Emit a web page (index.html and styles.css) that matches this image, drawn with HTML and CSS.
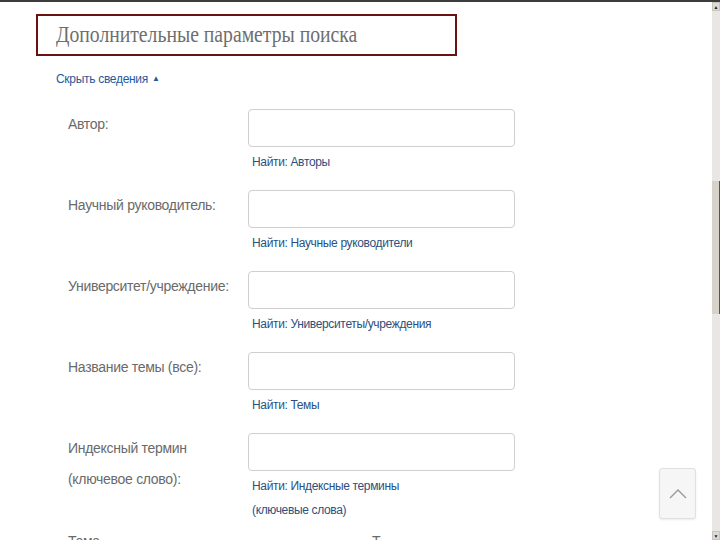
FILE: index.html
```html
<!DOCTYPE html>
<html lang="ru">
<head>
<meta charset="utf-8">
<title>Дополнительные параметры поиска</title>
<link rel="stylesheet" href="styles.css">
</head>
<body>
<div class="viewport">
  <main class="content">
    <h1 class="title-box"><span class="title-text">Дополнительные параметры поиска</span></h1>
    <a class="toggle" href="#">Скрыть сведения <span class="tri">▲</span></a>
    <div class="form">
      <div class="row">
        <label class="label">Автор:</label>
        <div class="field"><div class="input"></div><a class="find" href="#">Найти: Авторы</a></div>
      </div>
      <div class="row">
        <label class="label">Научный руководитель:</label>
        <div class="field"><div class="input"></div><a class="find" href="#">Найти: Научные руководители</a></div>
      </div>
      <div class="row">
        <label class="label">Университет/учреждение:</label>
        <div class="field"><div class="input"></div><a class="find" href="#">Найти: Университеты/учреждения</a></div>
      </div>
      <div class="row">
        <label class="label">Название темы (все):</label>
        <div class="field"><div class="input"></div><a class="find" href="#">Найти: Темы</a></div>
      </div>
      <div class="row row-tight">
        <label class="label">Индексный термин<br>(ключевое слово):</label>
        <div class="field"><div class="input"></div><a class="find" href="#">Найти: Индексные термины<br>(ключевые слова)</a></div>
      </div>
      <div class="row">
        <label class="label">Тема</label>
        <div class="field"><span class="label">Т</span></div>
      </div>
    </div>
    <button class="to-top" aria-label="Наверх">
      <svg width="18" height="12" viewBox="0 0 18 12"><path d="M1 10 L9 2 L17 10" fill="none" stroke="#9a9a9a" stroke-width="1.4"/></svg>
    </button>
  </main>
  <div class="scrollbar">
    <div class="sb-btn">▲</div>
    <div class="sb-track">
      <div class="sb-thumb"></div>
    </div>
    <div class="sb-btn">▼</div>
  </div>
</div>
</body>
</html>
```

FILE: styles.css
```css
html, body {
  margin: 0;
  padding: 0;
  background: #fff;
}
.viewport {
  display: flex;
  height: 538px;
  border-top: 2px solid #3c3c3c;
  overflow: hidden;
}
.content {
  position: relative;
  flex: 1;
  padding-left: 36px;
  overflow: hidden;
  font-family: "Liberation Sans", Arial, sans-serif;
}
.title-box {
  box-sizing: border-box;
  width: 421px;
  height: 42px;
  margin: 12px 0 0 0;
  border: 2px solid #6a1212;
  padding-left: 18px;
  font-family: "Liberation Serif", "Times New Roman", serif;
  font-weight: normal;
  font-size: 24px;
  line-height: 37px;
  color: #6e6e6e;
  white-space: nowrap;
}
.title-text {
  display: inline-block;
  transform: scaleX(0.82);
  transform-origin: left center;
}
.toggle {
  display: inline-block;
  margin: 15px 0 0 20px;
  font-size: 12px;
  line-height: 16px;
  color: #245a9c;
  text-decoration: none;
  letter-spacing: -0.3px;
}
.tri {
  font-size: 8px;
  vertical-align: 2px;
  margin-left: 1px;
}
.form {
  margin-top: 22px;
  padding-left: 32px;
}
.row {
  display: grid;
  grid-template-columns: 180px 267px;
  margin-bottom: 16px;
}
.row-tight {
  margin-bottom: 4px;
}
.label {
  font-size: 14px;
  line-height: 31px;
  color: #6a6a6a;
  letter-spacing: -0.3px;
}
.field {
  display: flex;
  flex-direction: column;
  align-items: flex-start;
}
.input {
  box-sizing: border-box;
  width: 267px;
  height: 38px;
  border: 1px solid #cfcfcf;
  border-radius: 4px;
  background: #fff;
}
.find {
  margin: 3px 0 0 4px;
  font-size: 12px;
  line-height: 24px;
  color: #2c4f80;
  text-decoration: none;
  letter-spacing: -0.35px;
}
.field > .label {
  margin-left: 124px;
}
.to-top {
  position: absolute;
  left: 659px;
  top: 466px;
  width: 37px;
  height: 51px;
  padding: 0;
  border: 1px solid #e0e0e0;
  border-radius: 3px;
  background: #f6f6f6;
  box-shadow: 0 1px 2px rgba(0,0,0,0.08);
  display: flex;
  align-items: center;
  justify-content: center;
}
.scrollbar {
  width: 8px;
  display: flex;
  flex-direction: column;
  background: #e9e7e3;
}
.sb-btn {
  height: 9px;
  font-size: 5px;
  line-height: 9px;
  text-align: center;
  color: #222;
  background: #dedbd5;
  border: 1px solid #c8c5bf;
  box-sizing: border-box;
}
.sb-track {
  flex: 1;
  padding-top: 170px;
}
.sb-thumb {
  height: 133px;
  background: #d6d2ca;
  border-right: 1px solid #555;
  box-sizing: border-box;
}
```
